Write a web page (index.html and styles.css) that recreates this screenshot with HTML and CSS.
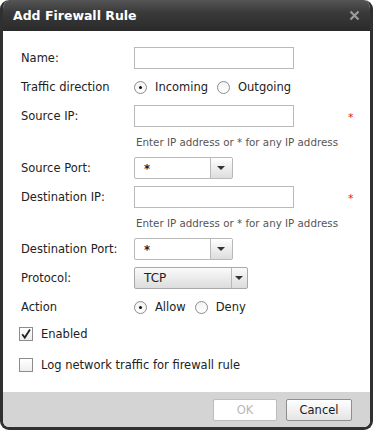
FILE: index.html
```html
<!DOCTYPE html>
<html lang="en">

<head>
  <meta charset="UTF-8" />
  <title>Add Firewall Rule</title>
  <link rel="stylesheet" href="styles.css">
</head>

<body>
  <div class="dialog">
    <div class="titlebar">
      <span class="title">Add Firewall Rule</span>
      <svg class="close" width="11" height="11" viewBox="0 0 11 11">
        <path d="M1.5 1.5 L9.5 9.5 M9.5 1.5 L1.5 9.5" stroke="#9a9a9a" stroke-width="2.2" />
      </svg>
    </div>

    <div class="content">
      <div class="row">
        <label class="lbl">Name:</label>
        <div class="field"><span class="input"></span></div>
      </div>

      <div class="row">
        <label class="lbl">Traffic direction</label>
        <div class="field radios">
          <span class="radio on"></span><span class="opt">Incoming</span>
          <span class="radio"></span><span class="opt">Outgoing</span>
        </div>
      </div>

      <div class="row">
        <label class="lbl">Source IP:</label>
        <div class="field"><span class="input"></span><span class="req">*</span></div>
      </div>
      <div class="hint">Enter IP address or * for any IP address</div>

      <div class="row">
        <label class="lbl">Source Port:</label>
        <div class="field">
          <span class="select"><span class="val">*</span><span class="arrow"></span></span>
        </div>
      </div>

      <div class="row">
        <label class="lbl">Destination IP:</label>
        <div class="field"><span class="input"></span><span class="req">*</span></div>
      </div>
      <div class="hint">Enter IP address or * for any IP address</div>

      <div class="row">
        <label class="lbl">Destination Port:</label>
        <div class="field">
          <span class="select"><span class="val">*</span><span class="arrow"></span></span>
        </div>
      </div>

      <div class="row">
        <label class="lbl">Protocol:</label>
        <div class="field">
          <span class="select proto"><span class="val">TCP</span><span class="arrow"></span></span>
        </div>
      </div>

      <div class="row action">
        <label class="lbl">Action</label>
        <div class="field radios">
          <span class="radio on"></span><span class="opt">Allow</span>
          <span class="radio"></span><span class="opt">Deny</span>
        </div>
      </div>

      <div class="check">
        <span class="box on">
          <svg width="12" height="12" viewBox="0 0 12 12">
            <path d="M2.2 6.2 L4.8 9.6 L10 1.6" fill="none" stroke="#222" stroke-width="1.8" />
          </svg>
        </span>
        <span class="opt">Enabled</span>
      </div>

      <div class="check">
        <span class="box"></span>
        <span class="opt">Log network traffic for firewall rule</span>
      </div>
    </div>

    <div class="footer">
      <button class="btn" disabled>OK</button>
      <button class="btn cancel">Cancel</button>
    </div>
  </div>
</body>

</html>
```

FILE: styles.css
```css
* {
  box-sizing: border-box;
  margin: 0;
  padding: 0;
}
body {
  background: #fff;
  font-family: "DejaVu Sans", Verdana, sans-serif;
  font-size: 11.5px;
  color: #222;
}
/* Dialog frame */
.dialog {
  width: 373px;
  height: 430px;
  border: 3px solid #303030;
  border-top: none;
  border-radius: 9px;
  overflow: hidden;
  background: #fff;
  display: flex;
  flex-direction: column;
}
.titlebar {
  height: 31px;
  margin: 0 -3px;
  background: linear-gradient(#555, #3a3a3a 40%, #2a2a2a);
  display: flex;
  align-items: center;
  justify-content: space-between;
  padding: 0 13px 1px 13px;
  border-radius: 9px 9px 0 0;
}
.title {
  color: #fff;
  font-size: 12.5px;
  font-weight: bold;
}
/* Form body */
.content {
  flex: 1;
  padding: 16px 0 0 18px;
}
.row {
  display: flex;
  align-items: center;
  height: 22px;
  margin-bottom: 7px;
}
.lbl {
  width: 113px;
  flex: none;
}
.field {
  display: flex;
  align-items: center;
}
.input {
  display: block;
  width: 160px;
  height: 22px;
  border: 1px solid #b9b9b9;
  background: #fff;
}
.req {
  color: #e02020;
  font-size: 11px;
  margin-left: 54px;
  margin-top: 3px;
}
.hint {
  margin: 0 0 7px 115px;
  height: 16px;
  font-size: 10.3px;
  color: #555;
  line-height: 16px;
}
/* Select boxes */
.select {
  display: flex;
  width: 99px;
  height: 22px;
  border: 1px solid #b9b9b9;
  border-radius: 2px;
  background: #fff;
}
.select .val {
  flex: 1;
  padding: 4px 0 0 9px;
  font-weight: bold;
  line-height: 14px;
}
.select .arrow {
  width: 22px;
  border-left: 1px solid #b9b9b9;
  background: linear-gradient(#fff, #ddd);
  position: relative;
}
.select .arrow::after {
  content: "";
  position: absolute;
  left: 6px;
  top: 8px;
  border-left: 4px solid transparent;
  border-right: 4px solid transparent;
  border-top: 4px solid #333;
}
.select.proto {
  width: 114px;
  border-color: #a8a8a8;
  background: linear-gradient(#fafafa, #dcdcdc);
}
.select.proto .val {
  font-weight: normal;
  font-size: 12px;
  padding-top: 3px;
}
.select.proto .arrow {
  width: 16px;
  background: none;
}
.select.proto .arrow::after {
  left: 3px;
}
/* Radios and checkboxes */
.radios .opt {
  margin: 0 9px 0 8px;
}
.radio {
  display: inline-block;
  width: 13px;
  height: 13px;
  border: 1px solid #8c8c8c;
  border-radius: 50%;
  background: linear-gradient(#f2f2f2, #fff);
  position: relative;
}
.radio.on::after {
  content: "";
  position: absolute;
  left: 4px;
  top: 4px;
  width: 3px;
  height: 3px;
  border-radius: 50%;
  background: #111;
}
.action {
  margin-bottom: 8px;
}
.check {
  display: flex;
  align-items: center;
  height: 16px;
  margin: 0 0 15px -2px;
}
.box {
  width: 14px;
  height: 14px;
  border: 1px solid #8c8c8c;
  background: linear-gradient(#fff, #eee);
  display: flex;
  align-items: center;
  justify-content: center;
  margin-right: 8px;
}
/* Footer */
.footer {
  height: 35px;
  background: #d4d4d4;
  display: flex;
  align-items: center;
  justify-content: flex-end;
  gap: 9px;
  padding: 0 18px 0 0;
}
.btn {
  width: 64px;
  height: 22px;
  font-family: inherit;
  font-size: 11.5px;
  border: 1px solid #bdbdbd;
  border-radius: 2px;
  background: #fff;
  color: #b8b8b8;
}
.btn.cancel {
  width: 66px;
  border-color: #8e8e8e;
  background: linear-gradient(#fff, #e4e4e4);
  color: #1a1a1a;
}
```
